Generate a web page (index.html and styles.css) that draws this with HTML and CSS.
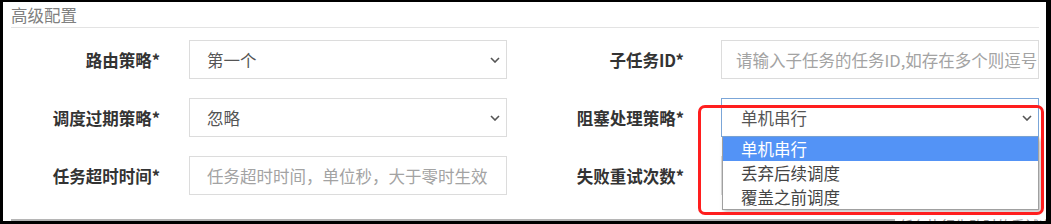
FILE: index.html
```
<!DOCTYPE html>
<html>
<head>
    <meta charset="utf-8">
    <title>高级配置</title>
    <link rel="stylesheet" href="styles.css">
</head>
<body>
    <div class="panel">
        <div class="legend">高级配置</div>

        <div class="form-grid">
            <div class="label">路由策略*</div>
            <div class="field select">
                <span>第一个</span>
                <svg class="chevron" width="10" height="6" viewBox="0 0 10 6"><polyline points="1,1 5,5 9,1" fill="none" stroke="#555" stroke-width="1.6"/></svg>
            </div>
            <div class="label label-right">子任务ID*</div>
            <div class="field input placeholder tight">请输入子任务的任务ID,如存在多个则逗号分隔</div>

            <div class="label">调度过期策略*</div>
            <div class="field select">
                <span>忽略</span>
                <svg class="chevron" width="10" height="6" viewBox="0 0 10 6"><polyline points="1,1 5,5 9,1" fill="none" stroke="#555" stroke-width="1.6"/></svg>
            </div>
            <div class="label label-right">阻塞处理策略*</div>
            <div class="select-wrap">
                <div class="field select focused">
                    <span>单机串行</span>
                    <svg class="chevron" width="10" height="6" viewBox="0 0 10 6"><polyline points="1,1 5,5 9,1" fill="none" stroke="#555" stroke-width="1.6"/></svg>
                </div>
                <ul class="dropdown">
                    <li class="active">单机串行</li>
                    <li>丢弃后续调度</li>
                    <li>覆盖之前调度</li>
                </ul>
            </div>

            <div class="label">任务超时时间*</div>
            <div class="field input placeholder">任务超时时间，单位秒，大于零时生效</div>
            <div class="label label-right">失败重试次数*</div>
            <div class="field input placeholder"></div>
        </div>

        <div class="footer">
            <div class="footer-line"></div>
            <div class="footer-hint">任务执行失败时的重试次数</div>
        </div>

        <div class="highlight"></div>
    </div>
</body>
</html>
```

FILE: styles.css
```
body {
    margin: 0;
    background: #000;
    font-family: "Noto Sans CJK SC", "Noto Sans", sans-serif;
    font-size: 16.5px;
}
.panel {
    position: relative;
    margin: 2px 5px 0 3px;
    height: 219px;
    padding: 0 7px 0 8px;
    background: #fff;
    overflow: hidden;
}
.legend {
    height: 24px;
    line-height: 24px;
    padding-top: 1px;
    color: #808080;
    border-bottom: 1px solid #e3e3e3;
}
.form-grid {
    display: grid;
    grid-template-columns: 178px 318px 214px 318px;
    grid-auto-rows: 39px;
    row-gap: 19px;
    margin-top: 12px;
}
.label {
    display: flex;
    align-items: center;
    justify-content: flex-end;
    padding-right: 29px;
    font-weight: bold;
    color: #333;
}
.label-right {
    padding-right: 37px;
}
.field {
    display: flex;
    align-items: center;
    justify-content: space-between;
    height: 39px;
    box-sizing: border-box;
    border: 1px solid #dcdcdc;
    padding: 0 6px 0 17px;
    color: #555;
    white-space: nowrap;
    overflow: hidden;
}
.tight {
    padding-left: 14px;
}
.placeholder {
    color: #a3a3a3;
}
.chevron {
    flex-shrink: 0;
}
.select-wrap {
    position: relative;
}
.focused {
    border-color: #7ba6d8;
    padding-left: 19px;
}
.dropdown {
    position: absolute;
    top: 100%;
    left: 1px;
    right: 0;
    margin: 0;
    padding: 0;
    list-style: none;
    background: #fff;
    border: 1px solid #a0a0a0;
    border-top: none;
    box-shadow: 2px 2px 4px rgba(0, 0, 0, 0.25);
    z-index: 2;
}
.dropdown li {
    line-height: 24px;
    padding-left: 18px;
    color: #444;
}
.dropdown li.active {
    background: #5393f6;
    color: #fff;
}
.footer {
    display: flex;
    align-items: flex-start;
    margin-top: 18px;
}
.footer-line {
    flex: 1;
    margin-top: 6px;
    border-top: 2px solid #b5b5b5;
}
.footer-hint {
    width: 140px;
    padding-left: 4px;
    font-size: 14px;
    line-height: 18px;
    margin-top: 3px;
    color: #999;
    white-space: nowrap;
}
.highlight {
    position: absolute;
    left: 695px;
    top: 103px;
    width: 346px;
    height: 110px;
    box-sizing: border-box;
    border: 3px solid #ff1e1e;
    border-radius: 7px;
    z-index: 3;
}
```
